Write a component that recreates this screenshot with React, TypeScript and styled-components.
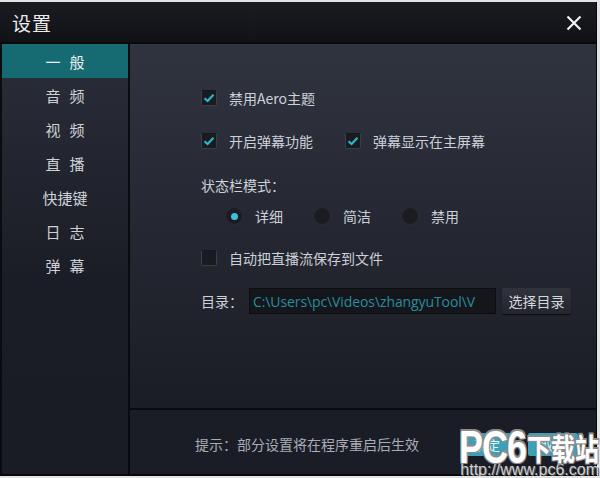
import * as React from 'react'
import styled, { createGlobalStyle } from 'styled-components'

const GlobalStyle = createGlobalStyle`
  html, body {
    margin: 0;
    padding: 0;
    background: #e4e4e4;
    font-family: "Noto Sans CJK SC", "Noto Sans", sans-serif;
    overflow: hidden;
  }
`

const menu = ['一般', '音频', '视频', '直播', '快捷键', '日志', '弹幕']

const Check = ({ on }: { on?: boolean }) => (
  <Box>
    {on && (
      <svg width="12" height="10" viewBox="0 0 12 10">
        <path d="M1.5 5.2 L4.6 8 L10.5 1.8" fill="none" stroke="#2fb4cc" strokeWidth="2.2" />
      </svg>
    )}
  </Box>
)

export default function App() {
  return (
    <>
      <GlobalStyle />
      <Window>
        <TitleBar>
          <Title>设置</Title>
          <Close>
            <svg width="16" height="16" viewBox="0 0 16 16">
              <path d="M1.5 1.5 L14.5 14.5 M14.5 1.5 L1.5 14.5" stroke="#f2f2f2" strokeWidth="2.2" />
            </svg>
          </Close>
        </TitleBar>
        <Body>
          <Sidebar>
            {menu.map((m, i) => (
              <MenuItem key={m} active={i === 0} spaced={m.length === 2}>
                {m.split('').map((c) => (
                  <span key={c}>{c}</span>
                ))}
              </MenuItem>
            ))}
          </Sidebar>
          <Main>
            <Content>
              <Row top={44}>
                <Option>
                  <Check on />
                  <Label>禁用Aero主题</Label>
                </Option>
              </Row>
              <Row top={23}>
                <Option width={144}>
                  <Check on />
                  <Label>开启弹幕功能</Label>
                </Option>
                <Option>
                  <Check on />
                  <Label>弹幕显示在主屏幕</Label>
                </Option>
              </Row>
              <Row top={24}>
                <Label>状态栏模式：</Label>
              </Row>
              <Row top={11} indent={24}>
                <Option width={88}>
                  <Radio on />
                  <Label>详细</Label>
                </Option>
                <Option width={88}>
                  <Radio />
                  <Label>简洁</Label>
                </Option>
                <Option>
                  <Radio />
                  <Label>禁用</Label>
                </Option>
              </Row>
              <Row top={22}>
                <Option>
                  <Check />
                  <Label>自动把直播流保存到文件</Label>
                </Option>
              </Row>
              <Row top={20} tall>
                <Label>目录：</Label>
                <PathInput>C:\Users\pc\Videos\zhangyuTool\V</PathInput>
                <Button>选择目录</Button>
              </Row>
            </Content>
            <Footer>
              <Hint>提示：部分设置将在程序重启后生效</Hint>
              <Actions>
                <Primary>确定</Primary>
                <Primary>取消</Primary>
              </Actions>
            </Footer>
          </Main>
        </Body>
        <Watermark>
          <Brand>
            <Latin>PC6</Latin>
            <Han>下载站</Han>
          </Brand>
          <Url>http://www.pc6.com</Url>
        </Watermark>
      </Window>
    </>
  )
}

const Window = styled.div`
  position: relative;
  margin-top: 2px;
  width: 597px;
  height: 474px;
  display: flex;
  flex-direction: column;
  background: #0b0c10;
  box-sizing: border-box;
  border-right: 1px solid #08090b;
  border-bottom: 2px solid #08090b;
`
const TitleBar = styled.div`
  height: 40px;
  display: flex;
  align-items: center;
  justify-content: space-between;
  padding: 0 14px 0 12px;
  background: linear-gradient(#1b1c22, #111216);
  border-bottom: 2px solid #08090b;
`
const Title = styled.div`
  font-size: 19px;
  color: #ececec;
  letter-spacing: 1px;
`
const Close = styled.div`
  display: flex;
  padding-top: 1px;
`
const Body = styled.div`
  flex: 1;
  display: flex;
  min-height: 0;
`
const Sidebar = styled.div`
  width: 126px;
  margin-left: 2px;
  display: flex;
  flex-direction: column;
  background: linear-gradient(#2a2e39, #1b1d26 55%, #1a1c25);
  border-right: 2px solid #0a0b0e;
`
const MenuItem = styled.div<{ active?: boolean; spaced?: boolean }>`
  height: 34px;
  display: flex;
  align-items: center;
  justify-content: center;
  gap: ${(p) => (p.spaced ? 9 : 0)}px;
  font-size: 15px;
  color: ${(p) => (p.active ? '#e8f0f2' : '#cdd1d8')};
  background: ${(p) => (p.active ? '#166b73' : 'transparent')};
`
const Main = styled.div`
  flex: 1;
  display: flex;
  flex-direction: column;
  min-width: 0;
`
const Content = styled.div`
  flex: 1;
  display: flex;
  flex-direction: column;
  padding-left: 71px;
  background: linear-gradient(#30343f, #262933 45%, #1b1d26);
`
const Row = styled.div<{ top: number; indent?: number; tall?: boolean }>`
  display: flex;
  align-items: center;
  height: ${(p) => (p.tall ? 26 : 20)}px;
  margin-top: ${(p) => p.top}px;
  padding-left: ${(p) => p.indent || 0}px;
`
const Option = styled.div<{ width?: number }>`
  display: flex;
  align-items: center;
  gap: 12px;
  width: ${(p) => (p.width ? `${p.width}px` : 'auto')};
`
const Label = styled.span`
  font-size: 14px;
  color: #ccd0d8;
  white-space: nowrap;
`
const Box = styled.div`
  width: 16px;
  height: 16px;
  box-sizing: border-box;
  border-radius: 2px;
  background: #191b21;
  border: 1px solid #3a3e48;
  border-top-color: #15171c;
  display: flex;
  align-items: center;
  justify-content: center;
`
const Radio = styled.div<{ on?: boolean }>`
  width: 18px;
  height: 18px;
  box-sizing: border-box;
  border-radius: 50%;
  background: #1a1c21;
  border: 1px solid #2c2f38;
  display: flex;
  align-items: center;
  justify-content: center;
  &::after {
    content: '';
    width: 7px;
    height: 7px;
    border-radius: 50%;
    background: ${(p) => (p.on ? '#3cc0d8' : 'transparent')};
  }
`
const PathInput = styled.div`
  width: 247px;
  height: 26px;
  box-sizing: border-box;
  margin-left: 6px;
  padding: 0 3px;
  display: flex;
  align-items: center;
  overflow: hidden;
  white-space: nowrap;
  font-family: "Open Sans", "Noto Sans CJK SC", sans-serif;
  font-size: 14px;
  letter-spacing: -0.1px;
  color: #2a8d9c;
  background: #14161b;
  border: 1px solid #0c0d10;
`
const Button = styled.div`
  margin-left: 6px;
  width: 69px;
  height: 26px;
  display: flex;
  align-items: center;
  justify-content: center;
  font-size: 14px;
  color: #d4d6dc;
  border-radius: 2px;
  background: linear-gradient(#30333c, #24262e);
  box-shadow: 0 1px 1px #0b0c0f;
`
const Footer = styled.div`
  height: 64px;
  display: flex;
  align-items: center;
  padding: 0 18px 0 65px;
  background: #1b1d26;
  border-top: 2px solid #0a0b0e;
`
const Hint = styled.span`
  flex: 1;
  font-size: 14px;
  color: #a9acb6;
  padding-top: 4px;
`
const Actions = styled.div`
  display: flex;
  gap: 16px;
  padding-top: 4px;
`
const Primary = styled.div`
  width: 50px;
  height: 23px;
  display: flex;
  align-items: center;
  justify-content: center;
  font-size: 13px;
  color: #eaf6f8;
  border-radius: 2px;
  background: #3aa1b9;
`
const Watermark = styled.div`
  position: absolute;
  right: -3px;
  top: 427px;
  display: flex;
  flex-direction: column;
  align-items: flex-end;
  font-family: "Liberation Sans", "Noto Sans CJK SC", sans-serif;
  pointer-events: none;
`
const Brand = styled.div`
  display: flex;
  align-items: center;
  height: 36px;
  color: #ffffff;
  font-weight: bold;
  text-shadow: 1px 1px 0 #8c8c8c, -1px -1px 0 #8c8c8c, 1px -1px 0 #8c8c8c, -1px 1px 0 #8c8c8c;
`
const Latin = styled.span`
  display: inline-block;
  font-family: "Liberation Sans", sans-serif;
  font-size: 36px;
  line-height: 36px;
  letter-spacing: -1px;
  transform: scaleY(1.3);
`
const Han = styled.span`
  display: inline-block;
  font-family: "Noto Sans CJK SC", sans-serif;
  font-size: 24px;
  line-height: 28px;
  transform: scaleY(1.25);
  margin-left: 1px;
`
const Url = styled.div`
  margin-top: -3px;
  font-size: 16px;
  line-height: 15px;
  color: #d0d0d0;
  text-shadow: 1px 1px 0 #555;
`
